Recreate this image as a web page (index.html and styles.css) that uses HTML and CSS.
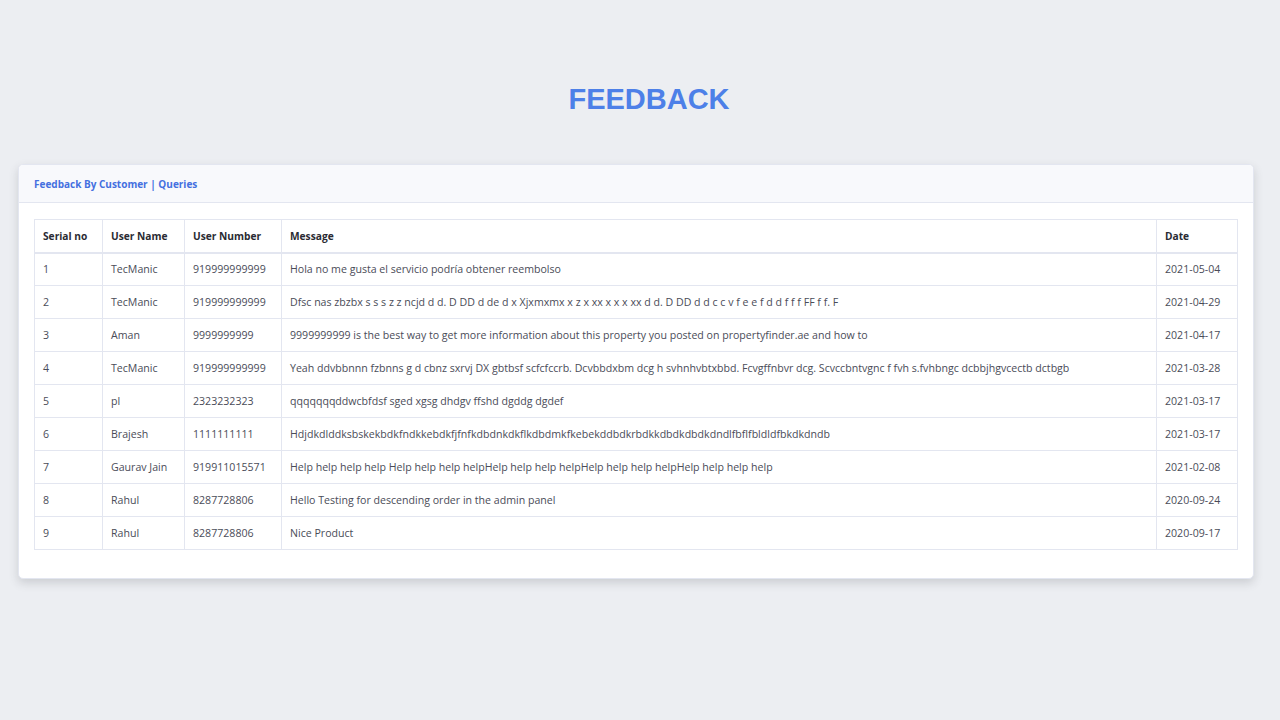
FILE: index.html
```html
<!DOCTYPE html>
<html lang="en">
<head>
<meta charset="utf-8">
<title>Feedback</title>
<link rel="stylesheet" href="styles.css">
</head>
<body>
<div class="page">
  <h1 class="title">FEEDBACK</h1>
  <div class="card">
    <div class="card-header">Feedback By Customer | Queries</div>
    <div class="card-body">
      <table class="table">
        <thead>
          <tr><th class="c1">Serial no</th><th class="c2">User Name</th><th class="c3">User Number</th><th class="c4">Message</th><th class="c5">Date</th></tr>
        </thead>
        <tbody>
          <tr><td>1</td><td>TecManic</td><td>919999999999</td><td>Hola no me gusta el servicio podría obtener reembolso</td><td>2021-05-04</td></tr>
          <tr><td>2</td><td>TecManic</td><td>919999999999</td><td>Dfsc nas zbzbx s s s z z ncjd d d. D DD d de d x Xjxmxmx x z x xx x x x xx d d. D DD d d c c v f e e f d d f f f FF f f. F</td><td>2021-04-29</td></tr>
          <tr><td>3</td><td>Aman</td><td>9999999999</td><td>9999999999 is the best way to get more information about this property you posted on propertyfinder.ae and how to</td><td>2021-04-17</td></tr>
          <tr><td>4</td><td>TecManic</td><td>919999999999</td><td>Yeah ddvbbnnn fzbnns g d cbnz sxrvj DX gbtbsf scfcfccrb. Dcvbbdxbm dcg h svhnhvbtxbbd. Fcvgffnbvr dcg. Scvccbntvgnc f fvh s.fvhbngc dcbbjhgvcectb dctbgb</td><td>2021-03-28</td></tr>
          <tr><td>5</td><td>pl</td><td>2323232323</td><td>qqqqqqqddwcbfdsf sged xgsg dhdgv ffshd dgddg dgdef</td><td>2021-03-17</td></tr>
          <tr><td>6</td><td>Brajesh</td><td>1111111111</td><td>Hdjdkdlddksbskekbdkfndkkebdkfjfnfkdbdnkdkflkdbdmkfkebekddbdkrbdkkdbdkdbdkdndlfbflfbldldfbkdkdndb</td><td>2021-03-17</td></tr>
          <tr><td>7</td><td>Gaurav Jain</td><td>919911015571</td><td>Help help help help Help help help helpHelp help help helpHelp help help helpHelp help help help</td><td>2021-02-08</td></tr>
          <tr><td>8</td><td>Rahul</td><td>8287728806</td><td>Hello Testing for descending order in the admin panel</td><td>2020-09-24</td></tr>
          <tr><td>9</td><td>Rahul</td><td>8287728806</td><td>Nice Product</td><td>2020-09-17</td></tr>
        </tbody>
      </table>
    </div>
  </div>
</div>
</body>
</html>
```
FILE: styles.css
```css
* { box-sizing: border-box; }
html, body { margin: 0; padding: 0; }
body {
  background: #eceef2;
  font-family: "Open Sans", "Noto Sans", sans-serif;
  color: #5a5c69;
  width: 1280px;
  height: 720px;
  overflow: hidden;
}
.page {
  padding: 84px 26px 0 18px;
}
.title {
  margin: 0 0 50px 0;
  padding-left: 26px;
  text-align: center;
  font-family: "Liberation Sans", Arial, sans-serif;
  font-weight: 700;
  font-size: 29px;
  line-height: 30px;
  color: #4d80e8;
}
.card {
  background: #fff;
  border: 1px solid #e3e6f0;
  border-radius: 5px;
  box-shadow: 0 4px 10px rgba(58, 59, 69, 0.18);
  overflow: hidden;
}
.card-header {
  background: #f8f9fc;
  border-bottom: 1px solid #e3e6f0;
  height: 38px;
  padding: 0 15px;
  display: flex;
  align-items: center;
  font-size: 10px;
  font-weight: 700;
  color: #4470e0;
}
.card-body {
  padding: 16px 15px 28px 15px;
}
.table {
  width: 100%;
  border-collapse: collapse;
  font-size: 10.6px;
}
.table th, .table td {
  border: 1px solid #e3e6f0;
  text-align: left;
  padding: 0 8px;
  height: 33px;
  vertical-align: middle;
  white-space: nowrap;
}
.table th {
  color: #2a2b33;
  font-weight: 700;
  font-size: 10.2px;
  border-bottom-width: 2px;
}
.table td { color: #4a4c58; }
.c1 { width: 68px; }
.c2 { width: 82px; }
.c3 { width: 97px; }
.c5 { width: 81px; }
```
